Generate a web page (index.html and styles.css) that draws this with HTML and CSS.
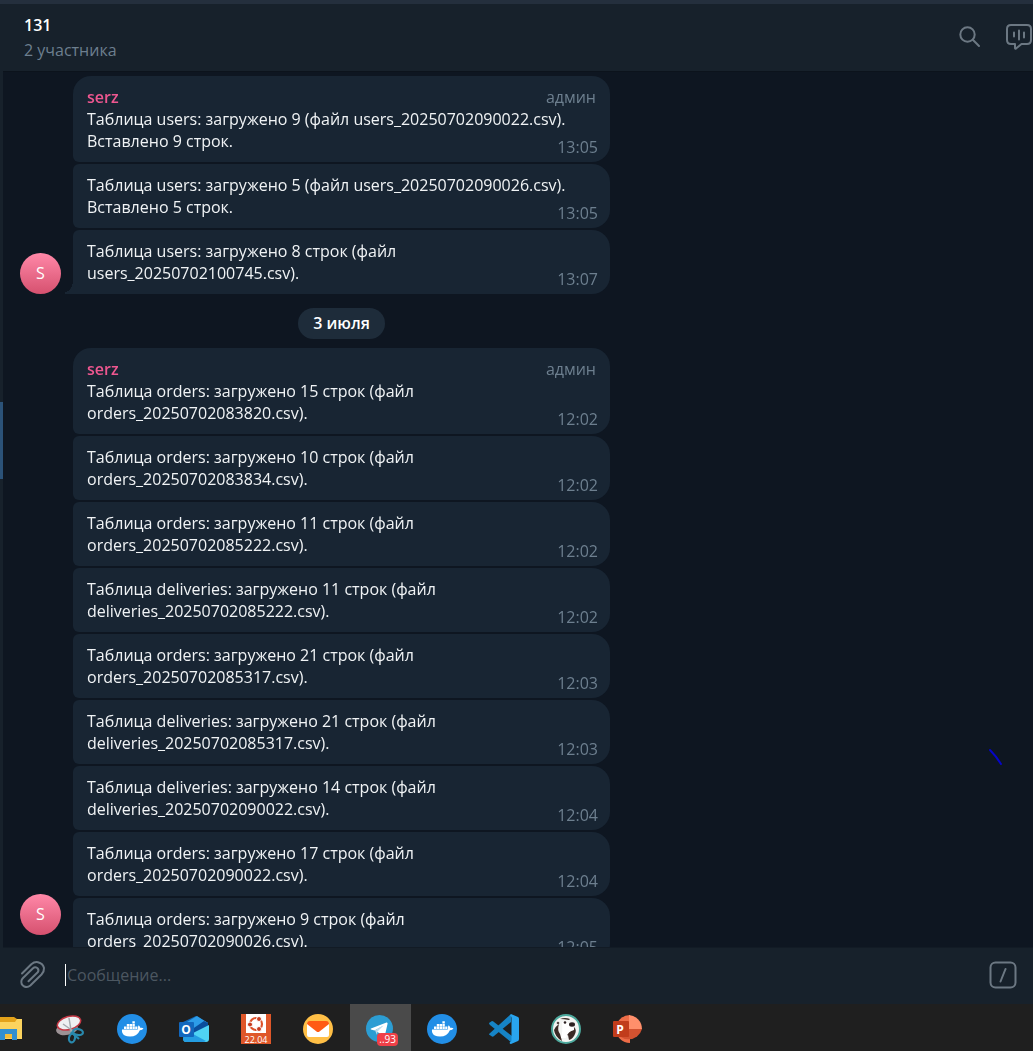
FILE: index.html
```html
<!DOCTYPE html>
<html lang="ru">
<head>
<meta charset="utf-8">
<meta name="viewport" content="width=device-width, initial-scale=1">
<title>131</title>
<link rel="stylesheet" href="styles.css">
</head>
<body>
<svg class="defs" aria-hidden="true">
  <symbol id="docker" viewBox="0 0 30 30">
    <circle cx="15" cy="15" r="15" fill="#228ee6"/>
    <path fill="#fff" d="M5 15.500H20.700Q21.300 14.800 21 13.800Q20.800 12.500 21.700 11.300Q23 12.300 23.200 13.800Q25.300 13.400 26.500 14.300Q25.600 16.200 22.900 16.300Q20.300 22.600 13 22.600Q6.500 22.600 5.100 18.300Q4.800 16.800 5 15.500Z"/>
    <path fill="#fff" d="M7 12.600h2.400v2.300H7zM9.800 12.600h2.400v2.300H9.800zM12.600 12.600H15v2.300h-2.400zM15.400 12.600h2.400v2.300h-2.400zM18.200 12.600h2.200v2.300h-2.200zM9.800 9.900h2.400v2.300H9.800zM12.600 9.900H15v2.300h-2.400zM15.400 9.900h2.400v2.300h-2.400zM15.400 7.200h2.400v2.300h-2.400z"/>
  </symbol>
</svg>
<div class="desktop">
  <div class="window">
    <div class="dialogs"><div class="dialogs__active"></div></div>
    <main class="chat">
      <header class="header">
        <div class="header__info">
          <h1 class="header__title">131</h1>
          <p class="header__status">2 участника</p>
        </div>
        <button class="icon-button" type="button" aria-label="Поиск">
          <svg width="24" height="24" viewBox="0 0 24 24" fill="none" stroke="#6c7883" stroke-width="2" stroke-linecap="round"><circle cx="9.500" cy="9.500" r="7.200"/><path d="M14.800 14.800L21 21"/></svg>
        </button>
        <button class="icon-button" type="button" aria-label="Голосовой чат">
          <svg width="26" height="28" viewBox="0 0 26 28" fill="none" stroke="#6c7883" stroke-width="2" stroke-linecap="round" stroke-linejoin="round"><path d="M5 2H21Q25 2 25 6V17Q25 21 21 21H15.500L10 25.500Q9 26 9 25V21H5Q1 21 1 17V6Q1 2 5 2Z"/><path d="M8 9.500v4M13 7.500v9M18 9.500v5"/></svg>
        </button>
      </header>

      <section class="history">
        <div class="group">
          <div class="avatar">S</div>
          <div class="group__messages">
            <article class="bubble bubble--first">
              <div class="bubble__body"><div class="bubble__author"><span class="bubble__name">serz</span><span class="bubble__role">админ</span></div>Таблица users: загружено 9 (файл users_20250702090022.csv).<br>Вставлено 9 строк.</div>
              <time class="bubble__time">13:05</time>
            </article>
            <article class="bubble">
              <div class="bubble__body">Таблица users: загружено 5 (файл users_20250702090026.csv).<br>Вставлено 5 строк.</div>
              <time class="bubble__time">13:05</time>
            </article>
            <article class="bubble bubble--last">
              <div class="bubble__body">Таблица users: загружено 8 строк (файл users_20250702100745.csv).</div>
              <time class="bubble__time">13:07</time>
            </article>
          </div>
        </div>

        <div class="date"><span class="date__label">3 июля</span></div>

        <div class="group">
          <div class="avatar">S</div>
          <div class="group__messages">
            <article class="bubble bubble--first">
              <div class="bubble__body"><div class="bubble__author"><span class="bubble__name">serz</span><span class="bubble__role">админ</span></div>Таблица orders: загружено 15 строк (файл orders_20250702083820.csv).</div>
              <time class="bubble__time">12:02</time>
            </article>
            <article class="bubble">
              <div class="bubble__body">Таблица orders: загружено 10 строк (файл orders_20250702083834.csv).</div>
              <time class="bubble__time">12:02</time>
            </article>
            <article class="bubble">
              <div class="bubble__body">Таблица orders: загружено 11 строк (файл orders_20250702085222.csv).</div>
              <time class="bubble__time">12:02</time>
            </article>
            <article class="bubble">
              <div class="bubble__body">Таблица deliveries: загружено 11 строк (файл deliveries_20250702085222.csv).</div>
              <time class="bubble__time">12:02</time>
            </article>
            <article class="bubble">
              <div class="bubble__body">Таблица orders: загружено 21 строк (файл orders_20250702085317.csv).</div>
              <time class="bubble__time">12:03</time>
            </article>
            <article class="bubble">
              <div class="bubble__body">Таблица deliveries: загружено 21 строк (файл deliveries_20250702085317.csv).</div>
              <time class="bubble__time">12:03</time>
            </article>
            <article class="bubble">
              <div class="bubble__body">Таблица deliveries: загружено 14 строк (файл deliveries_20250702090022.csv).</div>
              <time class="bubble__time">12:04</time>
            </article>
            <article class="bubble">
              <div class="bubble__body">Таблица orders: загружено 17 строк (файл orders_20250702090022.csv).</div>
              <time class="bubble__time">12:04</time>
            </article>
            <article class="bubble">
              <div class="bubble__body">Таблица orders: загружено 9 строк (файл orders_20250702090026.csv).</div>
              <time class="bubble__time">12:05</time>
            </article>
          </div>
        </div>
        <svg class="ink" width="16" height="20" viewBox="0 0 16 20" fill="none" stroke="#0606c8" stroke-width="2" stroke-linecap="round" aria-hidden="true"><path d="M2 2Q8 8 13 16"/></svg>
      </section>

      <form class="composer">
        <button class="icon-button" type="button" aria-label="Прикрепить файл">
          <svg width="28" height="30" viewBox="0 0 28 30" fill="none" stroke="#6c7883" stroke-width="2" stroke-linecap="round" stroke-linejoin="round"><path d="M3 13.500L12.300 4.200Q15.500 1.500 19 2.200Q24 3.500 25 8Q25.300 11.500 22.500 14.500L11.300 25.500Q8.500 28 5.300 26.500Q1.500 24.500 2.500 20.500Q2.800 19.300 4 18L14 8.200Q16 6.500 18.300 8Q20.400 10 18.700 12.300L9.500 21.300"/></svg>
        </button>
        <input class="composer__input" type="text" placeholder="Сообщение..." aria-label="Сообщение">
        <button class="icon-button" type="button" aria-label="Команды">
          <svg width="28" height="28" viewBox="0 0 28 28" fill="none" stroke="#6c7883" stroke-width="2" stroke-linecap="round"><rect x="1.500" y="1.500" width="25" height="25" rx="5"/><path d="M16.500 8L11.500 20.500"/></svg>
        </button>
      </form>
    </main>
  </div>

  <nav class="taskbar" aria-label="Панель задач">
    <button class="task" type="button" aria-label="Проводник">
      <svg class="task__icon" viewBox="0 0 30 30"><path fill="#e3a21a" d="M1 4Q1 3 2 3H21L24 5V10H1Z"/><path fill="#fbd35e" d="M1 8H22L24 5H29V25H1Z"/><path fill="#318fd0" d="M7 15H24V26H19V20H12V26H7Z"/><path fill="#f4bd39" d="M12 20h7v4h-7z"/></svg>
    </button>
    <button class="task" type="button" aria-label="Ножницы">
      <svg class="task__icon" viewBox="0 0 30 30"><ellipse cx="12" cy="15" rx="11" ry="6" fill="#9c9295" transform="rotate(-12 12 15)"/><ellipse cx="14" cy="9" rx="12" ry="6.500" fill="#eef0f2" stroke="#c43845" stroke-width="1.500" transform="rotate(-16 14 9)"/><path d="M8 10L18 17M14 4L16.500 19" stroke="#a5abb0" stroke-width="1.500" fill="none"/><g fill="none" stroke="#2989ad" stroke-width="2.200"><ellipse cx="23" cy="18" rx="5" ry="3" transform="rotate(12 23 18)"/><ellipse cx="17" cy="24" rx="3" ry="4.500" transform="rotate(12 17 24)"/><path d="M16 18L24 25"/></g></svg>
    </button>
    <button class="task" type="button" aria-label="Docker"><svg class="task__icon"><use href="#docker"/></svg></button>
    <button class="task" type="button" aria-label="Outlook">
      <svg class="task__icon" viewBox="0 0 30 30"><path fill="#1066b5" d="M4 8L17 2L29 9V18H4Z"/><path fill="#2d9ce8" d="M8 8L18 2L29 9L14 18Z"/><path fill="#0a4d9c" d="M12 16L25 7L29 9V12L17 20Z"/><path fill="#4fd3f4" d="M30 11V25Q30 28 27 28H7Q4 28 4 24L10 21Z"/><path fill="#249de2" d="M5 20H14L27 27Q26 28 24 28H7Q4 28 4 24Z"/><rect y="8" width="15" height="15" rx="1" fill="#1267bd"/><text x="7" y="20" class="task__letter" text-anchor="middle">O</text></svg>
    </button>
    <button class="task" type="button" aria-label="Ubuntu 22.04">
      <svg class="task__icon" viewBox="0 0 30 30"><rect width="30" height="30" fill="#df5729"/><path fill="#fff" d="M5 0h20v19H5z"/><circle cx="15" cy="10" r="6" fill="none" stroke="#dd522a" stroke-width="2.200"/><g fill="#c63c20" stroke="#fff"><circle cx="9" cy="10.500" r="2.500"/><circle cx="18" cy="5" r="2.500"/><circle cx="18" cy="15" r="2.500"/></g><text x="15" y="29" class="task__version" text-anchor="middle">22.04</text></svg>
    </button>
    <button class="task" type="button" aria-label="Почта">
      <svg class="task__icon" viewBox="0 0 30 30"><circle cx="15" cy="15" r="15" fill="#ffbf46"/><rect x="4" y="8" width="22" height="15" rx="2" fill="#fff"/><path fill="#ff5a14" d="M4 10Q4 7 7 7H23Q26 7 26 10L16.500 17.500Q15 18.500 13.500 17.500Z"/></svg>
    </button>
    <button class="task task--active" type="button" aria-label="Telegram, 93 сообщения">
      <svg class="task__icon" viewBox="0 0 30 30"><circle cx="14.500" cy="14.500" r="13.500" fill="#2c9dd3"/><path fill="#fff" d="M6 14.500L21.500 8.500Q23 8.200 22.500 10L20 21Q19.500 22.500 18 21.500L10.500 16.700L18.500 11.500L9.500 16.500L6 15.500Q5.200 15 6 14.500Z"/><path fill="#bddced" d="M10 16.200L18.500 11.500L12.500 17.500L12 21Z"/></svg>
      <span class="task__badge">..93</span>
    </button>
    <button class="task" type="button" aria-label="Docker Desktop"><svg class="task__icon"><use href="#docker"/></svg></button>
    <button class="task" type="button" aria-label="Visual Studio Code">
      <svg class="task__icon" viewBox="0 0 30 30"><path fill="#1684c6" d="M0 9L3 7Q4 7 5 8L23 22V29L1 11Q0 10 0 9Z"/><path fill="#1684c6" d="M0 20L22 0V8L5 22Q4 23 3 22.500L0 20.500Z"/><path fill="#29a5ef" d="M22 0L29 3Q30 3.500 30 5V25Q30 26.500 29 27L22 30Q20 30 21 28Q22.500 28 22.500 26V4Q22.500 2 21 2Z"/></svg>
    </button>
    <button class="task" type="button" aria-label="DBeaver">
      <svg class="task__icon" viewBox="0 0 30 30"><circle cx="15" cy="15" r="14" fill="#f3f4f2" stroke="#4da99d" stroke-width="2"/><path fill="#3a2925" d="M9 5Q14 3 19 5L18 6Q13 5 9 5Z"/><path fill="#3a2925" d="M23 13Q26 16 24 20Q22 25 18 26L17 21Q14 22 16 18L22 16Z"/><path fill="#3a2925" d="M3 16Q5 12 8 10Q6 16 9 20L11 27Q4 23 3 16Z"/><path fill="#fff" d="M11 8Q17 6 19 12Q24 12 23 16Q17 17 15 24L10 24Q12 17 11 8Z"/><ellipse cx="21" cy="10.500" rx="3" ry="2.200" fill="#2b2020"/><circle cx="14" cy="8.500" r="1.300" fill="#2b2020"/><circle cx="7" cy="9" r="1.300" fill="#524642"/></svg>
    </button>
    <button class="task" type="button" aria-label="PowerPoint">
      <svg class="task__icon" viewBox="0 0 30 30"><path fill="#ed6c47" d="M17 1A14 14 0 0 0 17 29Z"/><path fill="#ff8f6b" d="M16 1A14 14 0 0 1 29 15H16Z"/><path fill="#d35230" d="M2 15H29A14 14 0 0 1 2 15Z"/><rect y="7" width="16" height="16" rx="1" fill="#c13c1b"/><text x="7" y="20" class="task__letter" text-anchor="middle">P</text></svg>
    </button>
  </nav>
</div>
</body>
</html>
```
FILE: styles.css
```css
* {
  box-sizing: border-box;
}

body {
  margin: 0;
  background: #0e1621;
  color: #f0f3f5;
  font: 16px/22px "Open Sans", "Noto Sans", sans-serif;
  font-kerning: none;
}

button {
  padding: 0;
  border: 0;
  background: none;
  color: inherit;
  font: inherit;
}

.defs {
  display: none;
}

.desktop {
  display: flex;
  flex-direction: column;
  height: 100vh;
  overflow: hidden;
}

.window {
  display: flex;
  flex: 1;
  min-height: 0;
  border-top: 4px solid #242f3d;
}

.dialogs {
  flex: none;
  width: 3px;
  padding-top: 398px;
  background: #17212b;
}

.dialogs__active {
  height: 77px;
  background: #2b5278;
}

.chat {
  display: flex;
  flex: 1;
  flex-direction: column;
  min-width: 0;
}

.header {
  display: flex;
  flex: none;
  align-items: center;
  gap: 24px;
  padding: 9px 1px 10px 21px;
  border-bottom: 1px solid #0c131c;
  background: #17212b;
}

.header__info {
  flex: 1;
}

.header__title {
  margin: 0 0 2px;
  color: #fff;
  font-size: 16px;
  font-weight: 600;
  line-height: 24px;
}

.header__status {
  margin: 0;
  color: #6d7f8f;
}

.icon-button {
  display: flex;
  flex: none;
}

.history {
  position: relative;
  flex: 1;
  min-height: 0;
  overflow: hidden;
  padding: 4px 17px;
}

.group {
  display: flex;
  align-items: flex-end;
  gap: 12px;
}

.avatar {
  position: sticky;
  bottom: 8px;
  flex: none;
  width: 41px;
  height: 41px;
  border-radius: 50%;
  background: linear-gradient(#ff88a8, #d6516f);
  color: #fff;
  font-weight: 500;
  line-height: 41px;
  text-align: center;
}

.group__messages {
  display: flex;
  flex: 0 1 537px;
  flex-direction: column;
  gap: 2px;
}

.bubble {
  position: relative;
  display: grid;
  border-radius: 6px 18px 18px 6px;
  background: #182533;
}

.bubble--first {
  border-top-left-radius: 18px;
}

.bubble--last {
  border-bottom-left-radius: 0;
}

/* Tail that points at the avatar */
.bubble--last::before {
  position: absolute;
  bottom: 0;
  left: -8px;
  width: 8px;
  height: 14px;
  background: radial-gradient(ellipse 8px 12px at 0 0, transparent 98%, #182533);
  content: "";
}

.bubble__body,
.bubble__time {
  grid-area: 1 / 1;
}

.bubble__body {
  padding: 10px 14px;
}

.bubble__author {
  display: flex;
  justify-content: space-between;
}

.bubble__name {
  color: #ee5790;
  font-weight: 600;
}

.bubble__role,
.bubble__time {
  color: #6d7f8f;
}

.bubble__time {
  place-self: end;
  padding: 0 12px 4px 0;
}

.date {
  display: flex;
  justify-content: center;
  max-width: 590px;
  padding: 14px 0 9px 53px;
}

.date__label {
  padding: 0 15px;
  border-radius: 16px;
  background: #1e2c3a;
  color: #fff;
  font-weight: 600;
  line-height: 31px;
}

.ink {
  position: absolute;
  top: 676px;
  right: 29px;
}

.composer {
  display: flex;
  flex: none;
  align-items: center;
  gap: 18px;
  height: 57px;
  padding: 0 16px 2px;
  border-top: 1px solid #121b25;
  background: #17212b;
}

.composer__input {
  flex: 1;
  min-width: 0;
  height: 22px;
  padding: 0 0 1px 1px;
  border: 0;
  border-left: 1px solid #fff;
  outline: 0;
  background: none;
  color: #fff;
  font: inherit;
}

.composer__input::placeholder {
  color: #4c5761;
  opacity: 1;
}

.taskbar {
  display: flex;
  flex: none;
  gap: 1px;
  height: 47px;
  margin-left: -22px;
  background: #1f1f1f;
}

.task {
  position: relative;
  display: flex;
  flex: none;
  align-items: center;
  justify-content: center;
  width: 61px;
  height: 47px;
  padding: 3px 1px 0 0;
}

.task--active {
  background: #4a4a4a;
}

.task__icon {
  width: 30px;
  height: 30px;
}

.task__letter {
  fill: #fff;
  font: 700 12px "Open Sans", sans-serif;
}

.task__version {
  fill: #fff;
  font: 9px "Open Sans", sans-serif;
}

.task__badge {
  position: absolute;
  right: 13px;
  bottom: 5px;
  padding: 0 2px;
  border-radius: 4px;
  background: #ef4048;
  color: #fff;
  font-size: 10px;
  line-height: 13px;
}
```
